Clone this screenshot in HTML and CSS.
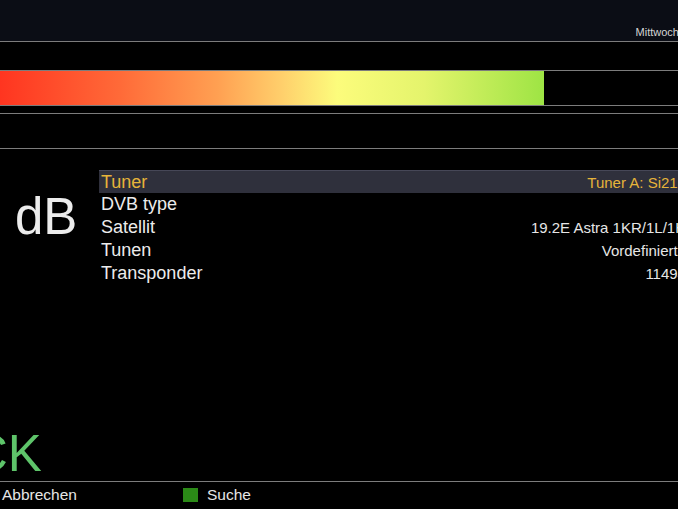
FILE: index.html
```html
<!DOCTYPE html>
<html lang="de">
<head>
<meta charset="utf-8">
<title>Signal</title>
<link rel="stylesheet" href="styles.css">
</head>
<body>
<div class="screen">
  <header class="header">
    <span class="date">Mittwoch</span>
  </header>
  <div class="rule"></div>
  <div class="meter-wrap">
    <div class="meter"><div class="meter-fill" style="width:544px"></div></div>
  </div>
  <div class="rule rule-gap1"></div>
  <div class="rule rule-gap2"></div>
  <main class="main">
    <div class="top">
      <div class="gauge">dB</div>
      <ul class="menu">
        <li class="row active"><span class="label">Tuner</span><span class="value">Tuner A: Si216</span></li>
        <li class="row"><span class="label">DVB type</span><span class="value"></span></li>
        <li class="row"><span class="label">Satellit</span><span class="value">19.2E Astra 1KR/1L/1H</span></li>
        <li class="row"><span class="label">Tunen</span><span class="value">Vordefinierte</span></li>
        <li class="row"><span class="label">Transponder</span><span class="value">11494</span></li>
      </ul>
    </div>
    <div class="lock">CK</div>
  </main>
  <div class="rule"></div>
  <footer class="footer">
    <div class="key"><span>Abbrechen</span></div>
    <div class="key"><span class="swatch green"></span><span>Suche</span></div>
  </footer>
</div>
</body>
</html>
```
FILE: styles.css
```css
html, body {
  margin: 0;
  padding: 0;
  background: #000;
  overflow: hidden;
}
.screen {
  width: 678px;
  height: 509px;
  overflow: hidden;
  display: flex;
  flex-direction: column;
  font-family: "Liberation Sans", Arial, sans-serif;
  color: #e6e6e6;
}
.header {
  height: 41px;
  background: #0b0d15;
  display: flex;
  justify-content: flex-end;
  align-items: flex-end;
  flex: none;
}
.date {
  font-size: 11px;
  line-height: 13px;
  color: #d4d4d4;
  padding-bottom: 2px;
  margin-right: -1px;
}
.rule {
  height: 1px;
  background: #7c7c7c;
  flex: none;
}
.meter-wrap {
  padding-top: 28px;
  flex: none;
}
.meter {
  height: 34px;
  border-top: 1px solid #7c7c7c;
  border-bottom: 1px solid #7c7c7c;
  display: flex;
}
.meter-fill {
  height: 100%;
  background: linear-gradient(90deg, #ff3520 0%, #ff6a38 22%, #ffa052 40%, #ffd06c 52%, #fcfc7c 62%, #e4f46c 78%, #9ee444 100%);
}
.rule-gap1 { margin-top: 7px; }
.rule-gap2 { margin-top: 34px; }
.main {
  flex: 1;
  display: flex;
  flex-direction: column;
  padding-top: 21px;
}
.top {
  display: flex;
}
.gauge {
  width: 84px;
  padding-left: 15px;
  margin-top: 21px;
  font-size: 51px;
  line-height: 51px;
  color: #ececec;
  flex: none;
}
.menu {
  list-style: none;
  margin: 0 -8px 0 0;
  padding: 0;
  flex: 1;
}
.row {
  height: 23px;
  display: flex;
  justify-content: space-between;
  align-items: baseline;
  padding-left: 2px;
  box-sizing: border-box;
}
.row.active {
  background: #2f303c;
  border-top: 1px solid #464757;
}
.label {
  font-size: 18px;
  line-height: 22px;
  color: #ececec;
}
.value {
  font-size: 15px;
  line-height: 22px;
  color: #e6e6e6;
  white-space: nowrap;
}
.row.active .label,
.row.active .value {
  color: #e6b43a;
}
.row:not(.active) .label { line-height: 23px; }
.row:not(.active) .value { line-height: 23px; }
.lock {
  margin-top: auto;
  margin-left: -29px;
  padding-bottom: 2px;
  font-size: 51px;
  line-height: 51px;
  color: #5ec46a;
}
.footer {
  height: 27px;
  display: grid;
  grid-template-columns: 181px 1fr;
  padding-left: 2px;
  align-items: center;
  padding-bottom: 1px;
  box-sizing: border-box;
  flex: none;
}
.key {
  display: flex;
  align-items: center;
  gap: 9px;
  font-size: 15.5px;
  color: #e6e6e6;
}
.swatch {
  width: 15px;
  height: 14px;
  display: inline-block;
}
.swatch.green { background: #2b8a17; }
```
